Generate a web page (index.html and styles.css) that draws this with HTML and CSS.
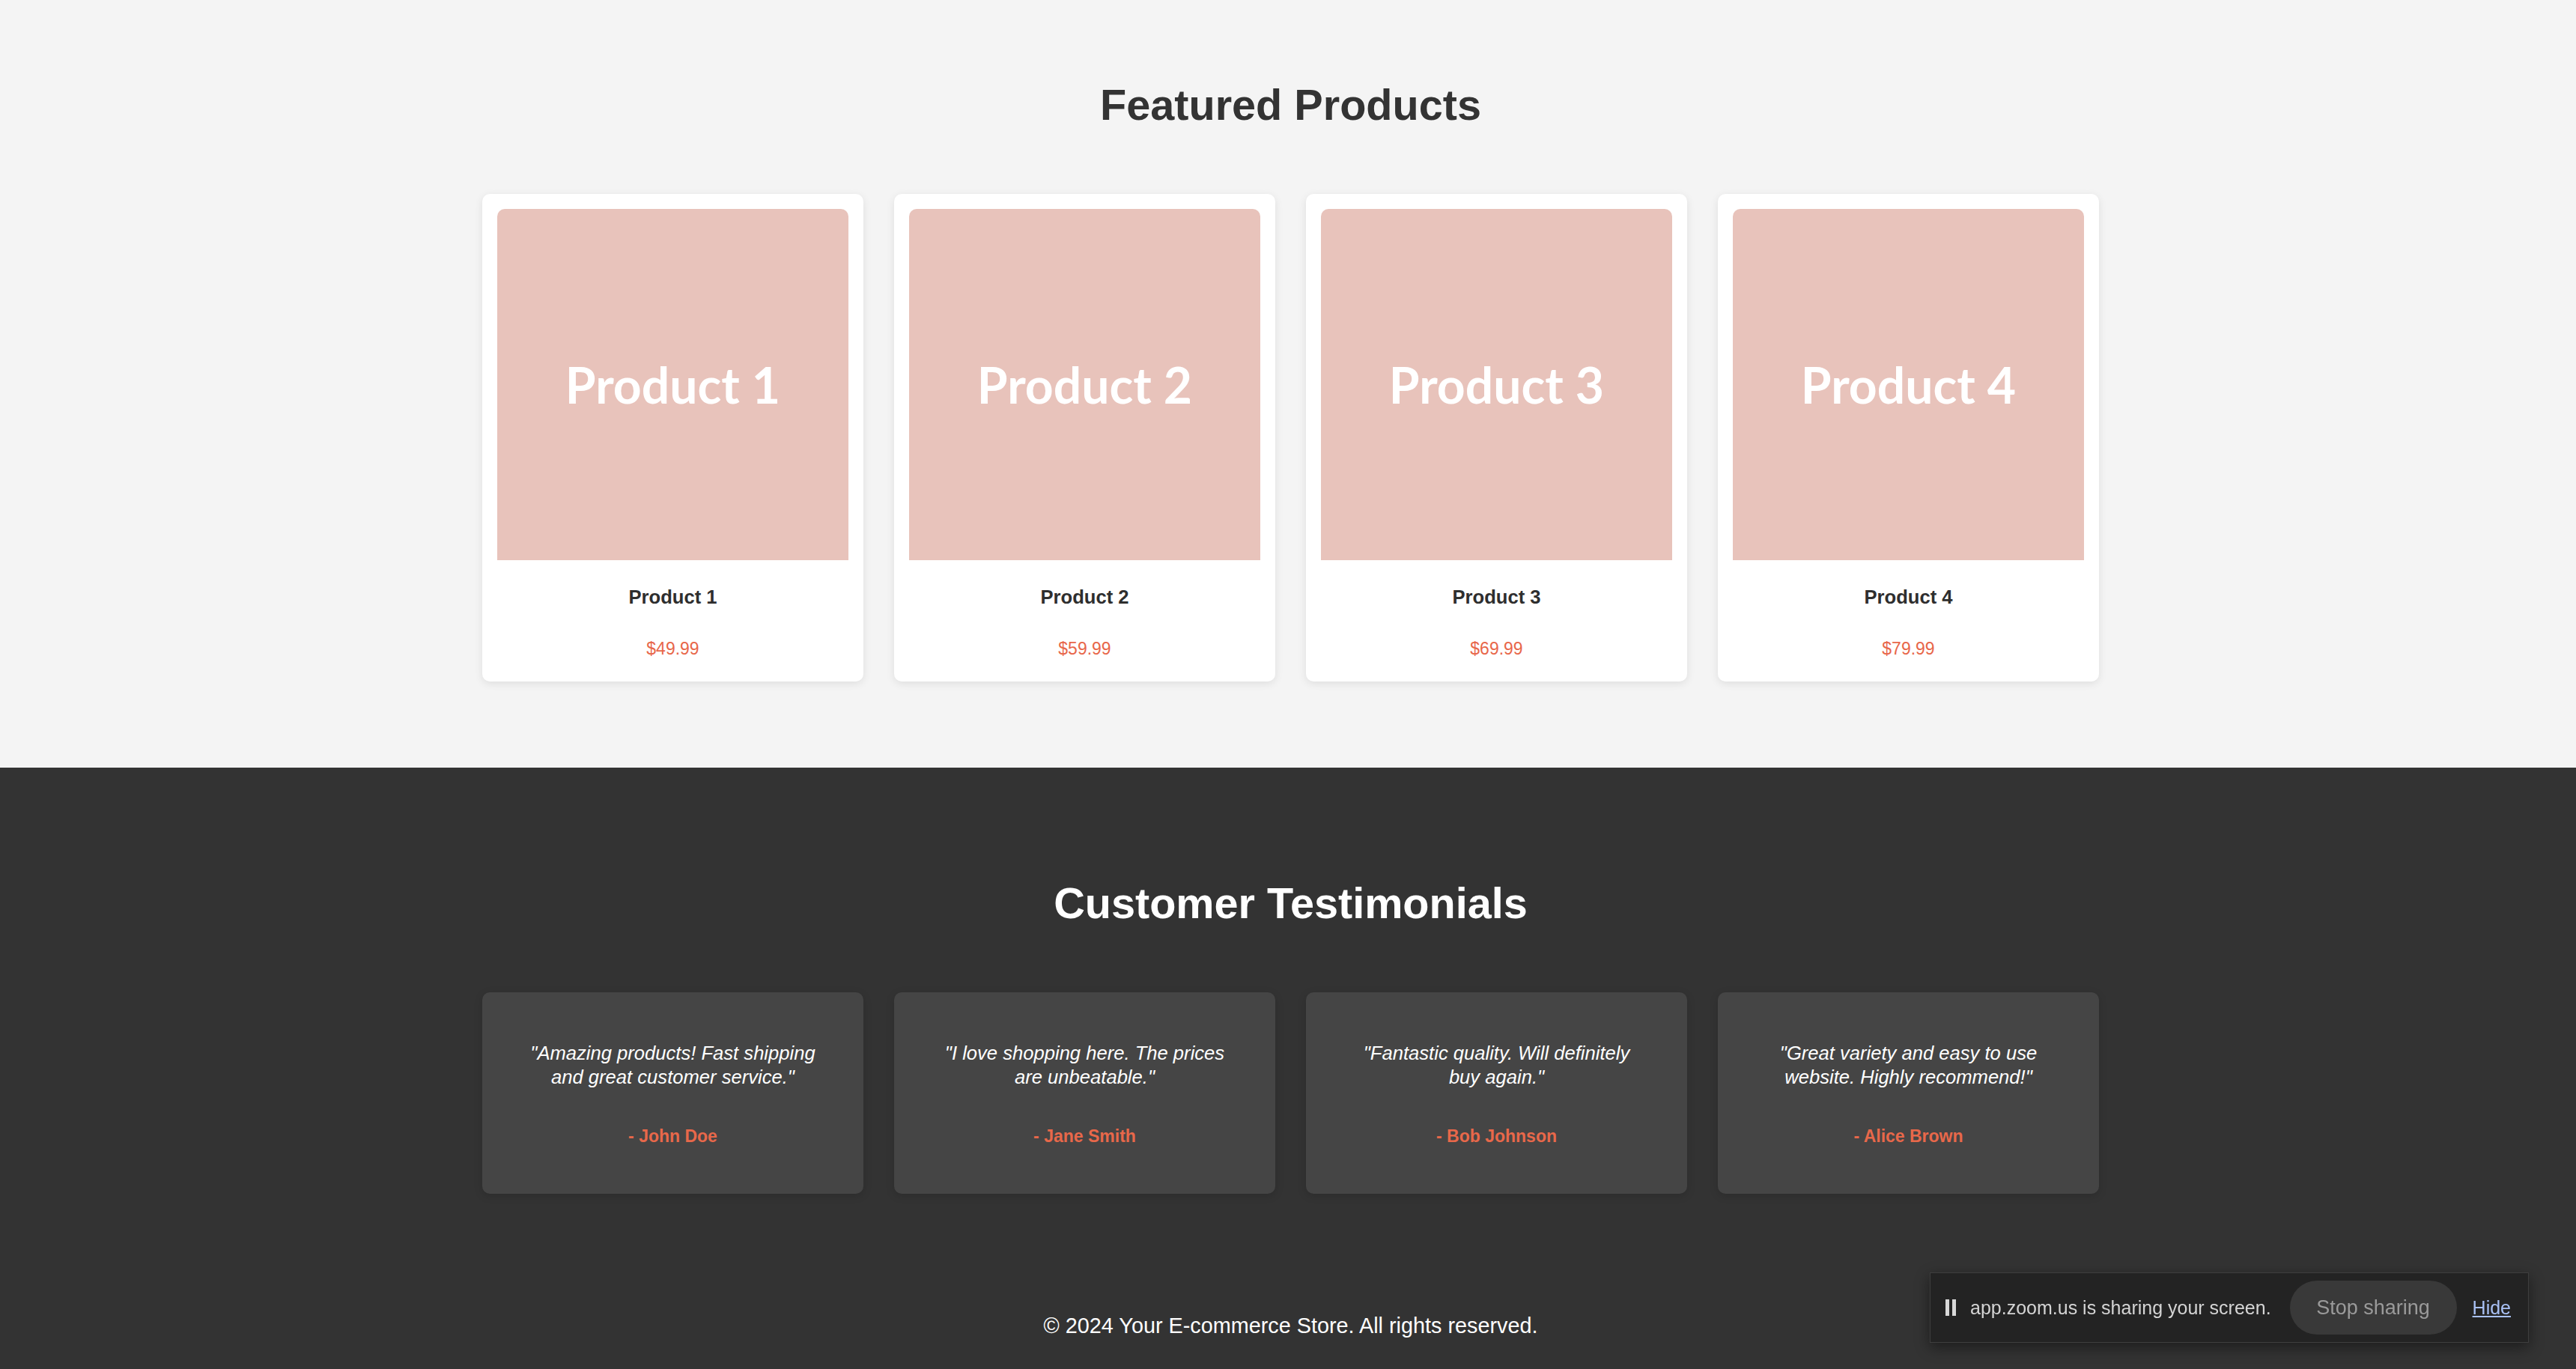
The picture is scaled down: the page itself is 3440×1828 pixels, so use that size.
FILE: index.html
```html
<!DOCTYPE html>
<html lang="en">
<head>
<meta charset="utf-8">
<title>Your E-commerce Store</title>
<link rel="stylesheet" href="styles.css">
</head>
<body>
<section class="featured">
  <div class="container">
    <h2 class="section-title">Featured Products</h2>
    <div class="grid">
      <div class="product-card">
        <div class="product-image"><span>Product 1</span></div>
        <h3 class="product-name">Product 1</h3>
        <p class="product-price">$49.99</p>
      </div>
      <div class="product-card">
        <div class="product-image"><span>Product 2</span></div>
        <h3 class="product-name">Product 2</h3>
        <p class="product-price">$59.99</p>
      </div>
      <div class="product-card">
        <div class="product-image"><span>Product 3</span></div>
        <h3 class="product-name">Product 3</h3>
        <p class="product-price">$69.99</p>
      </div>
      <div class="product-card">
        <div class="product-image"><span>Product 4</span></div>
        <h3 class="product-name">Product 4</h3>
        <p class="product-price">$79.99</p>
      </div>
    </div>
  </div>
</section>

<section class="testimonials">
  <div class="container">
    <h2 class="section-title light">Customer Testimonials</h2>
    <div class="grid">
      <div class="testimonial-card">
        <p class="quote">"Amazing products! Fast shipping and great customer service."</p>
        <p class="author">- John Doe</p>
      </div>
      <div class="testimonial-card">
        <p class="quote">"I love shopping here. The prices are unbeatable."</p>
        <p class="author">- Jane Smith</p>
      </div>
      <div class="testimonial-card">
        <p class="quote">"Fantastic quality. Will definitely buy again."</p>
        <p class="author">- Bob Johnson</p>
      </div>
      <div class="testimonial-card">
        <p class="quote">"Great variety and easy to use website. Highly recommend!"</p>
        <p class="author">- Alice Brown</p>
      </div>
    </div>
  </div>
  <footer class="footer">
    <div class="container">
      <p class="copyright">© 2024 Your E-commerce Store. All rights reserved.</p>
    </div>
  </footer>
</section>

<div class="share-bar">
  <span class="pause-icon"><i></i><i></i></span>
  <span class="share-text">app.zoom.us is sharing your screen.</span>
  <button class="stop-btn" type="button">Stop sharing</button>
  <a class="hide-link" href="#">Hide</a>
</div>
</body>
</html>
```

FILE: styles.css
```css
html, body {
  margin: 0;
  padding: 0;
  overflow: hidden;
}

body {
  font-family: "Liberation Sans", Helvetica, Arial, sans-serif;
  background: #333333;
  color: #333333;
}

.container {
  box-sizing: content-box;
  width: 2159px;
  margin: 0 auto;
  padding-left: 7px;
}

.section-title {
  margin: 0 0 86px;
  font-size: 57.6px;
  line-height: 66px;
  font-weight: 700;
  text-align: center;
  color: #333333;
}

.section-title.light {
  color: #ffffff;
}

.grid {
  display: grid;
  grid-template-columns: repeat(4, 509px);
  gap: 41px;
}

/* Featured products */
.featured {
  background: #f4f4f4;
  padding: 107px 0 115px;
}

.product-card {
  background: #ffffff;
  border-radius: 10px;
  padding: 20px;
  box-shadow: 0 3px 12px rgba(0, 0, 0, 0.09);
  text-align: center;
}

.product-image {
  height: 469px;
  background: #e8c3bb;
  border-radius: 10px 10px 0 0;
  display: flex;
  align-items: center;
  justify-content: center;
}

.product-image span {
  font-family: Lato, "Liberation Sans", sans-serif;
  font-weight: 700;
  font-size: 66px;
  color: #ffffff;
}

.product-name {
  margin: 34px 0 0;
  font-size: 25.6px;
  line-height: 30px;
  font-weight: 700;
  color: #2e2e2e;
}

.product-price {
  margin: 41px 0 11px;
  font-size: 23px;
  line-height: 26px;
  color: #e8674a;
}

/* Testimonials */
.testimonials {
  background: #333333;
  padding-top: 148px;
}

.testimonial-card {
  background: #454545;
  border-radius: 10px;
  padding: 65px 56px 64px;
  box-shadow: 0 3px 12px rgba(0, 0, 0, 0.15);
  text-align: center;
}

.quote {
  margin: 0 0 50px;
  font-size: 25.6px;
  line-height: 32px;
  font-style: italic;
  color: #ffffff;
}

.author {
  margin: 0;
  font-size: 23px;
  line-height: 26px;
  font-weight: 700;
  color: #e8684a;
}

/* Footer */
.footer {
  padding: 160px 0 41px;
}

.copyright {
  margin: 0;
  font-size: 28.8px;
  line-height: 33px;
  text-align: center;
  color: #ffffff;
}

/* Screen sharing notification */
.share-bar {
  position: fixed;
  right: 63px;
  bottom: 35px;
  box-sizing: border-box;
  width: 800px;
  height: 94px;
  display: flex;
  align-items: center;
  padding: 0 23px 0 20px;
  background: #232323;
  border: 1px solid #3e3e3e;
  box-shadow: 0 6px 18px rgba(0, 0, 0, 0.45);
  font-family: "Liberation Sans", Helvetica, Arial, sans-serif;
}

.pause-icon {
  display: flex;
  gap: 4px;
  margin-right: 19px;
}

.pause-icon i {
  display: block;
  width: 5px;
  height: 22px;
  background: #d8d8d8;
}

.share-text {
  flex: 1;
  font-size: 25px;
  color: #d4d4d4;
  white-space: nowrap;
}

.stop-btn {
  width: 223px;
  height: 72px;
  border: 0;
  border-radius: 36px;
  background: #393939;
  color: #9a9a9a;
  font-family: inherit;
  font-size: 27px;
  padding: 0;
  margin-right: 21px;
}

.hide-link {
  font-size: 25px;
  color: #a9c1f5;
  text-decoration: underline;
}
```
